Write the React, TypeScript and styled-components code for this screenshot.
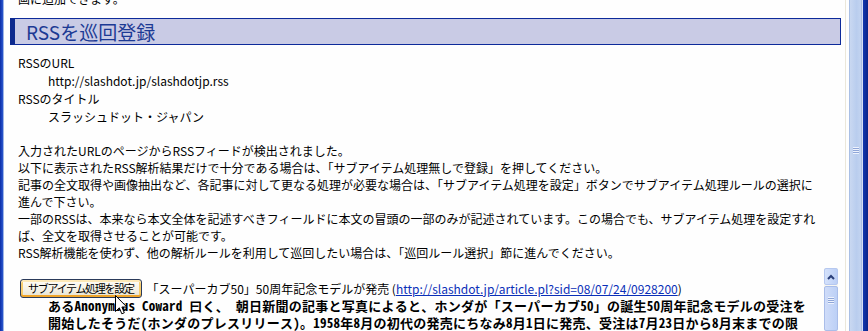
import React from "react";
import styled, { createGlobalStyle } from "styled-components";

const Global = createGlobalStyle`
  html, body { margin: 0; padding: 0; background: #fefefe; overflow: hidden; }
  body { font-family: "Noto Sans CJK JP", "Noto Sans", sans-serif; color: #000; }
`;

const Window = styled.div`
  display: flex;
  width: 868px;
  height: 331px;
  overflow: hidden;
  background: #fefefe;
`;

const LeftFrame = styled.div`
  flex: none;
  width: 3px;
  background: linear-gradient(to right, #0b2ea6, #2a57cf);
  border-right: 1px solid #9fb6e6;
`;

const RightFrame = styled.div`
  flex: none;
  width: 5px;
  background: linear-gradient(to right, #1038b0, #0a2488);
  border-left: 1px solid #d4def4;
`;

const Content = styled.div`
  position: relative;
  flex: none;
  width: 841px;
  display: flex;
  flex-direction: column;
  font-size: 12px;
`;

const Line = styled.div<{ $indent?: number; $lh?: number }>`
  white-space: nowrap;
  line-height: ${(p) => p.$lh ?? 17}px;
  height: ${(p) => p.$lh ?? 17}px;
  padding-left: ${(p) => 14 + (p.$indent ?? 0)}px;
`;

const TopCut = styled(Line)`
  margin-top: -10px;
`;

const SectionHeader = styled.div`
  margin: 11px 4px 0 6px;
  height: 25px;
  border: 1px solid #0d2a9a;
  border-left: 5px solid #0d2a8e;
  background: #c9cbe5;
  display: flex;
  align-items: center;
  padding-left: 11px;
  color: #1c3a94;
  font-size: 19px;
  line-height: 25px;
  white-space: nowrap;
`;

const InfoList = styled.div`
  margin-top: 9px;
  display: flex;
  flex-direction: column;
`;

const Paragraph = styled.div`
  margin-top: 16px;
  display: flex;
  flex-direction: column;
`;

const Preview = styled.div`
  margin: 7px 7px 0 10px;
  display: flex;
  height: 120px;
`;

const PreviewBody = styled.div`
  flex: 1;
  padding: 12px 0 0 6px;
  position: relative;
`;

const ItemRow = styled.div`
  display: flex;
  align-items: center;
  height: 17px;
  white-space: nowrap;
`;

const XPButton = styled.button`
  height: 19px;
  margin: -1px 5px 0 0;
  padding: 0 7px;
  font-family: "Noto Sans CJK JP", sans-serif;
  font-size: 11px;
  letter-spacing: -1.3px;
  color: #000;
  border: 1px solid #2a3a5a;
  border-radius: 3px;
  background: linear-gradient(to bottom, #fffef8, #f3f0e4 60%, #e6e1cf);
  box-shadow: inset 0 2px 0 #fde9b8, inset 0 -2px 0 #efa52a, inset 2px 0 0 #f7cd6e, inset -2px 0 0 #f7cd6e;
  line-height: 17px;
  cursor: default;
`;

const ItemTitle = styled.span`
  font-size: 12px;
`;

const Link = styled.a`
  color: #0a2fb8;
  text-decoration: underline;
`;

const Summary = styled.div`
  padding-left: 28px;
  font-family: "Noto Sans Mono CJK JP", "Noto Sans CJK JP", monospace;
  font-weight: bold;
  font-size: 13px;
  letter-spacing: 0.25px;
  display: flex;
  flex-direction: column;
`;

const BoldLine = styled.div`
  white-space: nowrap;
  line-height: 17px;
  height: 17px;
`;

const InnerScroll = styled.div`
  flex: none;
  width: 14px;
  background: #f7f6f1;
  display: flex;
  flex-direction: column;
  gap: 1px;
`;

const ScrollBtn = styled.div`
  height: 15px;
  border: 1px solid #b6c8f0;
  border-radius: 2px;
  background: linear-gradient(to right, #d5e2fb, #bccff6);
  display: flex;
  align-items: center;
  justify-content: center;
`;

const Thumb = styled.div`
  flex: 1;
  border: 1px solid #a9bde9;
  border-radius: 2px;
  background: linear-gradient(to right, #cfdcf9, #bcd0f6);
  display: flex;
  justify-content: center;
  padding-top: 10px;
`;

const Grip = styled.div`
  width: 6px;
  height: 7px;
  background: repeating-linear-gradient(to bottom, #eef3fd 0 1px, #8fa6d8 1px 2px);
`;

const OuterScroll = styled.div`
  flex: none;
  width: 13px;
  border-left: 1px solid #ebe7da;
  padding-left: 3px;
  background: #fefefe;
  display: flex;
`;

const OuterThumb = styled.div`
  flex: 1;
  border-left: 1px solid #a9bfe4;
  border-right: 1px solid #a9bfe4;
  background: linear-gradient(to right, #c9d8f1, #b9cdee 60%, #c3d4f0);
  display: flex;
  justify-content: center;
  padding-top: 147px;
`;

const Cursor = styled.svg`
  position: absolute;
  left: 101px;
  top: 27px;
`;

export default function App() {
  return (
    <>
      <Global />
      <Window>
        <LeftFrame />
        <Content>
          <TopCut>画に追加できます。</TopCut>
          <SectionHeader>RSSを巡回登録</SectionHeader>
          <InfoList>
            <Line $lh={18}>RSSのURL</Line>
            <Line $lh={18} $indent={30}>http://slashdot.jp/slashdotjp.rss</Line>
            <Line $lh={18}>RSSのタイトル</Line>
            <Line $lh={18} $indent={30}>スラッシュドット・ジャパン</Line>
          </InfoList>
          <Paragraph>
            <Line>入力されたURLのページからRSSフィードが検出されました。</Line>
            <Line>以下に表示されたRSS解析結果だけで十分である場合は、「サブアイテム処理無しで登録」を押してください。</Line>
            <Line>記事の全文取得や画像抽出など、各記事に対して更なる処理が必要な場合は、「サブアイテム処理を設定」ボタンでサブアイテム処理ルールの選択に</Line>
            <Line>進んで下さい。</Line>
            <Line>一部のRSSは、本来なら本文全体を記述すべきフィールドに本文の冒頭の一部のみが記述されています。この場合でも、サブアイテム処理を設定すれ</Line>
            <Line>ば、全文を取得させることが可能です。</Line>
            <Line>RSS解析機能を使わず、他の解析ルールを利用して巡回したい場合は、「巡回ルール選択」節に進んでください。</Line>
          </Paragraph>
          <Preview>
            <PreviewBody>
              <ItemRow>
                <XPButton type="button">サブアイテム処理を設定</XPButton>
                <ItemTitle>
                  「スーパーカブ50」50周年記念モデルが発売 (
                  <Link href="#">http://slashdot.jp/article.pl?sid=08/07/24/0928200</Link>)
                </ItemTitle>
              </ItemRow>
              <Summary>
                <BoldLine>あるAnonymous Coward 曰く、 朝日新聞の記事と写真によると、ホンダが「スーパーカブ50」の誕生50周年記念モデルの受注を</BoldLine>
                <BoldLine>開始したそうだ(ホンダのプレスリリース)。1958年8月の初代の発売にちなみ8月1日に発売、受注は7月23日から8月末までの限</BoldLine>
              </Summary>
              <Cursor width="13" height="20" viewBox="0 0 13 20">
                <path d="M0.5 0.5 L0.5 16.5 L4.3 12.8 L6.8 18.8 L9.3 17.8 L6.9 12 L11.8 12 Z" fill="#fff" stroke="#000" strokeWidth="1" strokeLinejoin="miter" />
              </Cursor>
            </PreviewBody>
            <InnerScroll>
              <ScrollBtn>
                <svg width="8" height="6" viewBox="0 0 8 6">
                  <path d="M1 5 L4 2 L7 5" fill="none" stroke="#2a3f7a" strokeWidth="2" />
                </svg>
              </ScrollBtn>
              <Thumb>
                <Grip />
              </Thumb>
            </InnerScroll>
          </Preview>
        </Content>
        <OuterScroll>
          <OuterThumb>
            <Grip />
          </OuterThumb>
        </OuterScroll>
        <RightFrame />
      </Window>
    </>
  );
}
